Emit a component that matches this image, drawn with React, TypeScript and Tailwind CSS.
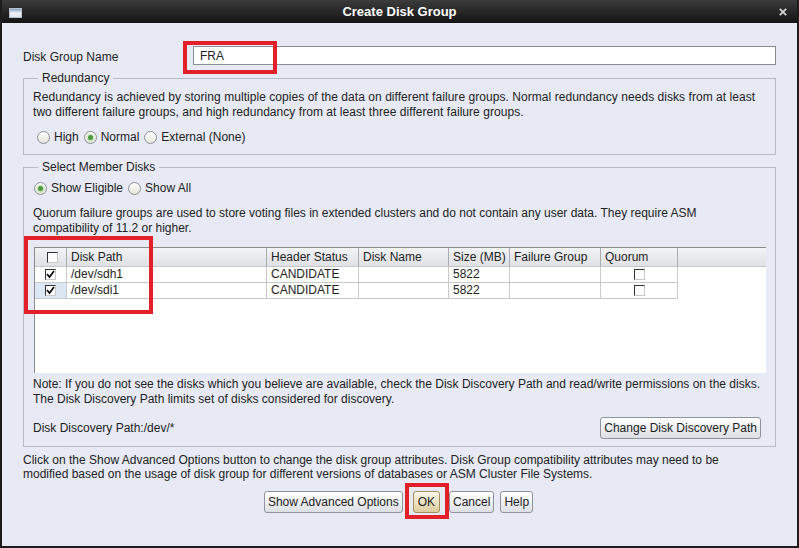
import type { ReactNode } from 'react';

const COLS = [
  { key: 'check', label: '', width: 'w-[32px]' },
  { key: 'path', label: 'Disk Path', width: 'w-[200px]' },
  { key: 'status', label: 'Header Status', width: 'w-[92px]' },
  { key: 'name', label: 'Disk Name', width: 'w-[90px]' },
  { key: 'size', label: 'Size (MB)', width: 'w-[61px]' },
  { key: 'fg', label: 'Failure Group', width: 'w-[91px]' },
  { key: 'quorum', label: 'Quorum', width: 'w-[77px]' },
];

const DISKS = [
  { path: '/dev/sdh1', status: 'CANDIDATE', size: '5822', focused: false },
  { path: '/dev/sdi1', status: 'CANDIDATE', size: '5822', focused: true },
];

const Radio = ({ checked, label }: { checked?: boolean; label: string }) => (
  <label className="flex items-center gap-[4px]">
    <span className="flex h-[13px] w-[13px] items-center justify-center rounded-full border border-[#8c9099] bg-gradient-to-b from-[#ffffff] to-[#e4e4da]">
      {checked && (
        <span className="h-[5px] w-[5px] rounded-full bg-[#4f9a3c] shadow-[0_0_2px_1px_#b9dcaa]" />
      )}
    </span>
    <span>{label}</span>
  </label>
);

const Check = ({ checked }: { checked?: boolean }) => (
  <span className="relative flex h-[11px] w-[11px] border-t border-l border-r border-b border-t-[#333] border-l-[#333] border-r-[#c8c8c8] border-b-[#c8c8c8] bg-white">
    {checked && (
      <svg viewBox="0 0 11 11" className="absolute -top-px -left-px h-[11px] w-[11px]">
        <path d="M2 5 L4.5 8 L9 2" fill="none" stroke="#111" strokeWidth="1.8" />
      </svg>
    )}
  </span>
);

const Button = ({ children, primary }: { children: ReactNode; primary?: boolean }) => (
  <button
    className={
      primary
        ? 'h-[22px] rounded-[3px] border border-[#a38f5e] bg-gradient-to-b from-[#fbf6e8] to-[#dccd9e] px-[4px] text-[#222]'
        : 'h-[22px] rounded-[3px] border border-[#8f949c] bg-gradient-to-b from-[#ffffff] to-[#dcdfe5] px-[3px] text-[#222]'
    }
  >
    {children}
  </button>
);

const RedMark = ({ className }: { className: string }) => (
  <span className={`pointer-events-none absolute border-[4px] border-[#e3202a] ${className}`} />
);

export default function App() {
  return (
    <div
      className="flex h-[548px] w-[799px] flex-col overflow-hidden border-r-2 border-b-2 border-l-2 border-[#1c1c1c] bg-[#e7eaf4] text-[12px] leading-[15px] text-[#222]"
      style={{ fontFamily: '"Liberation Sans", Arial, sans-serif' }}
    >
      {/* title bar */}
      <div className="relative flex h-[23px] shrink-0 items-center justify-center bg-gradient-to-b from-[#3c3c3c] to-[#141414]">
        <span className="absolute top-[8px] left-[7px] h-[10px] w-[13px] border border-[#b9c2cf] bg-gradient-to-b from-[#8aa4c4] via-[#f2f4f8] to-[#dfe6ee]" />
        <span className="text-[13px] font-bold text-white">Create Disk Group</span>
        <svg viewBox="0 0 10 10" className="absolute top-[8px] right-[10px] h-[8px] w-[8px]">
          <path d="M1 1 L9 9 M9 1 L1 9" stroke="#d6d6d6" strokeWidth="2.2" />
        </svg>
      </div>

      <div className="flex flex-1 flex-col px-[21px]">
        <div className="mt-[23px] flex h-[19px] items-center">
          <span className="w-[170px] pt-[4px]">Disk Group Name</span>
          <div className="relative h-[19px] flex-1 border border-[#8a8d92] bg-white pl-[6px] pt-px leading-[17px]">
            FRA
            <RedMark className="-top-[6px] -left-[11px] h-[33px] w-[94px]" />
          </div>
        </div>

        <fieldset className="mt-[6px] border border-[#b7bbc4] px-[9px] pb-[10px]">
          <legend className="ml-[5px] px-[4px]">Redundancy</legend>
          <p className="mt-[4px] tracking-[0.05px]">
            Redundancy is achieved by storing multiple copies of the data on different failure groups. Normal redundancy needs disks from at least
            <br />
            two different failure groups, and high redundancy from at least three different failure groups.
          </p>
          <div className="mt-[10px] flex h-[14px] items-center gap-[5px] pl-[4px]">
            <Radio label="High" />
            <Radio checked label="Normal" />
            <Radio label="External (None)" />
          </div>
        </fieldset>

        <fieldset className="mt-[5px] border border-[#b7bbc4] pr-[9px] pb-[7px] pl-[10px]">
          <legend className="ml-[4px] px-[4px]">Select Member Disks</legend>
          <div className="mt-[6px] flex h-[14px] items-center gap-[5px]">
            <Radio checked label="Show Eligible" />
            <Radio label="Show All" />
          </div>
          <p className="mt-[11px] -ml-px">
            Quorum failure groups are used to store voting files in extended clusters and do not contain any user data. They require ASM
            <br />
            compatibility of 11.2 or higher.
          </p>

          <div className="relative mt-[11px] flex h-[126px] flex-col border-t border-l border-[#8a8a8a] bg-white">
            <RedMark className="-top-[12px] -left-[11px] h-[78px] w-[129px]" />
            <div className="flex h-[19px] border-b border-[#c3c6cc] bg-gradient-to-b from-[#f2f3f5] to-[#dfe1e5]">
              {COLS.map((c) => (
                <div
                  key={c.key}
                  className={`${c.width} flex items-center border-r border-[#a9acb2] pl-[4px] ${c.key === 'check' ? 'justify-center pl-0' : ''}`}
                >
                  {c.key === 'check' ? <Check /> : c.label}
                </div>
              ))}
            </div>
            {DISKS.map((d) => (
              <div key={d.path} className="flex h-[16px]">
                <div className={`flex w-[32px] items-center justify-center border-r border-b border-[#c8cacf] ${d.focused ? 'bg-[#dde6f3]' : ''}`}>
                  <Check checked />
                </div>
                <div className="flex w-[200px] items-center border-r border-b border-[#c8cacf] pl-[4px]">{d.path}</div>
                <div className="flex w-[92px] items-center border-r border-b border-[#c8cacf] pl-[4px]">{d.status}</div>
                <div className="w-[90px] border-r border-b border-[#c8cacf]" />
                <div className="flex w-[61px] items-center border-r border-b border-[#c8cacf] pl-[4px]">{d.size}</div>
                <div className="w-[91px] border-r border-b border-[#c8cacf]" />
                <div className="flex w-[77px] items-center justify-center border-r border-b border-[#c8cacf]">
                  <Check />
                </div>
              </div>
            ))}
          </div>

          <p className="mt-[4px] -ml-px">
            Note: If you do not see the disks which you believe are available, check the Disk Discovery Path and read/write permissions on the disks.
            <br />
            The Disk Discovery Path limits set of disks considered for discovery.
          </p>
          <div className="mt-[10px] flex items-center justify-between -ml-px pr-[5px]">
            <span>Disk Discovery Path:/dev/*</span>
            <Button>Change Disk Discovery Path</Button>
          </div>
        </fieldset>

        <p className="mt-[6px] leading-[14px]">
          Click on the Show Advanced Options button to change the disk group attributes. Disk Group compatibility attributes may need to be
          <br />
          modified based on the usage of disk group for different versions of databases or ASM Cluster File Systems.
        </p>

        <div className="mt-[10px] flex justify-center gap-[6px] pr-[2px]">
          <Button>Show Advanced Options</Button>
          <span className="relative ml-[4px] mr-[3px] flex">
            <Button primary>OK</Button>
            <RedMark className="-top-[8px] -left-[8px] h-[36px] w-[44px]" />
          </span>
          <Button>Cancel</Button>
          <Button>Help</Button>
        </div>
      </div>
    </div>
  );
}
